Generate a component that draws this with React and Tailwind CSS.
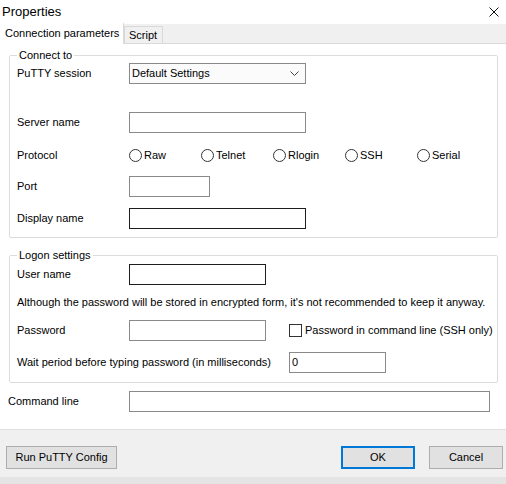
import React from "react";

const Box = ({ w, dark, children }) => (
  <div
    className={`h-[21px] bg-white border flex items-center pl-[2px] ${dark ? "border-[#1e1e1e]" : "border-[#8a8a8a]"}`}
    style={{ width: w }}
  >
    {children}
  </div>
);

const Row = ({ label, mt, children, labelW = "w-[112px]" }) => (
  <div className={`flex items-center h-[21px] ${mt}`}>
    <div className={`${labelW} shrink-0`}>{label}</div>
    {children}
  </div>
);

const Radio = ({ label }) => (
  <div className="w-[72px] flex items-center">
    <div className="w-[13px] h-[13px] rounded-full border border-[#333] bg-white shrink-0" />
    <span className="ml-[2px]">{label}</span>
  </div>
);

const Button = ({ children, w, primary }) => (
  <button
    className={`h-[23px] bg-[#e1e1e1] flex items-center justify-center ${primary ? "border-2 border-[#0078d7]" : "border border-[#adadad]"}`}
    style={{ width: w }}
  >
    {children}
  </button>
);

export default function App() {
  const protocols = ["Raw", "Telnet", "Rlogin", "SSH", "Serial"];

  return (
    <div className="w-[506px] h-[484px] flex flex-col bg-white font-['Liberation_Sans',sans-serif] text-[11px] text-[#000] whitespace-nowrap overflow-hidden">
      {/* title bar */}
      <div className="h-[24px] flex items-center justify-between shrink-0">
        <span className="pl-[2px] text-[13px]">Properties</span>
        <svg width="10" height="10" viewBox="0 0 10 10" className="mr-[7px]">
          <path d="M0.5 0.5 L9.5 9.5 M9.5 0.5 L0.5 9.5" stroke="#111" strokeWidth="1" />
        </svg>
      </div>

      {/* tabs */}
      <div className="h-[20px] bg-[#f0f0f0] border-b border-[#d9d9d9] flex items-end shrink-0">
        <div className="w-[124px] h-[21px] -mb-px bg-white border-r border-[#d9d9d9] pl-[5px] flex items-center">
          Connection parameters
        </div>
        <div className="w-[39px] h-[17px] border border-b-0 border-[#d9d9d9] pl-[4px] flex items-center">
          Script
        </div>
      </div>

      {/* content */}
      <div className="h-[386px] shrink-0 bg-white border-b border-[#dfdfdf] pl-[9px] pt-[4px]">
        <fieldset className="w-[489px] border border-[#dcdcdc] rounded-[2px] pl-[7px] pb-[8px]">
          <legend className="px-[2px] leading-[14px]">Connect to</legend>
          <Row label="PuTTY session" mt="mt-[1px]">
            <div className="w-[177px] h-[21px] border border-[#8a8a8a] bg-[#fbfbfb] flex items-center justify-between pl-[2px] pr-[6px]">
              <span>Default Settings</span>
              <svg width="9" height="6" viewBox="0 0 9 6">
                <path d="M0.5 0.5 L4.5 4.5 L8.5 0.5" fill="none" stroke="#444" strokeWidth="1" />
              </svg>
            </div>
          </Row>
          <Row label="Server name" mt="mt-[28px]">
            <Box w="177px" />
          </Row>
          <Row label="Protocol" mt="mt-[12px]">
            {protocols.map((p) => (
              <Radio key={p} label={p} />
            ))}
          </Row>
          <Row label="Port" mt="mt-[10px]">
            <Box w="81px" />
          </Row>
          <Row label="Display name" mt="mt-[11px]">
            <Box w="177px" dark />
          </Row>
        </fieldset>

        <fieldset className="mt-[10px] w-[489px] border border-[#dcdcdc] rounded-[2px] pl-[7px] pb-[9px]">
          <legend className="px-[2px] leading-[14px]">Logon settings</legend>
          <Row label="User name" mt="mt-[2px]">
            <Box w="137px" dark />
          </Row>
          <div className="h-[21px] mt-[7px] flex items-center">
            Although the password will be stored in encrypted form, it's not recommended to keep it anyway.
          </div>
          <Row label="Password" mt="mt-[7px]">
            <Box w="137px" />
            <div className="ml-[23px] w-[13px] h-[13px] border border-[#333] bg-white shrink-0" />
            <span className="ml-[3px]">Password in command line (SSH only)</span>
          </Row>
          <Row label="Wait period before typing password (in milliseconds)" labelW="w-[272px]" mt="mt-[11px]">
            <Box w="97px">0</Box>
          </Row>
        </fieldset>

        <div className="mt-[8px] flex items-center h-[21px] -ml-px">
          <div className="w-[121px] shrink-0">Command line</div>
          <Box w="361px" />
        </div>
      </div>

      {/* footer */}
      <div className="flex-1 bg-[#f0f0f0] flex flex-col">
        <div className="flex items-center pt-[16px] pl-[6px] pr-[3px]">
          <Button w="111px">Run PuTTY Config</Button>
          <div className="flex-1" />
          <Button w="74px" primary>OK</Button>
          <div className="w-[14px]" />
          <Button w="74px">Cancel</Button>
        </div>
        <div className="flex-1" />
        <div className="h-[7px] bg-[#e4e4e4]" />
      </div>
    </div>
  );
}
